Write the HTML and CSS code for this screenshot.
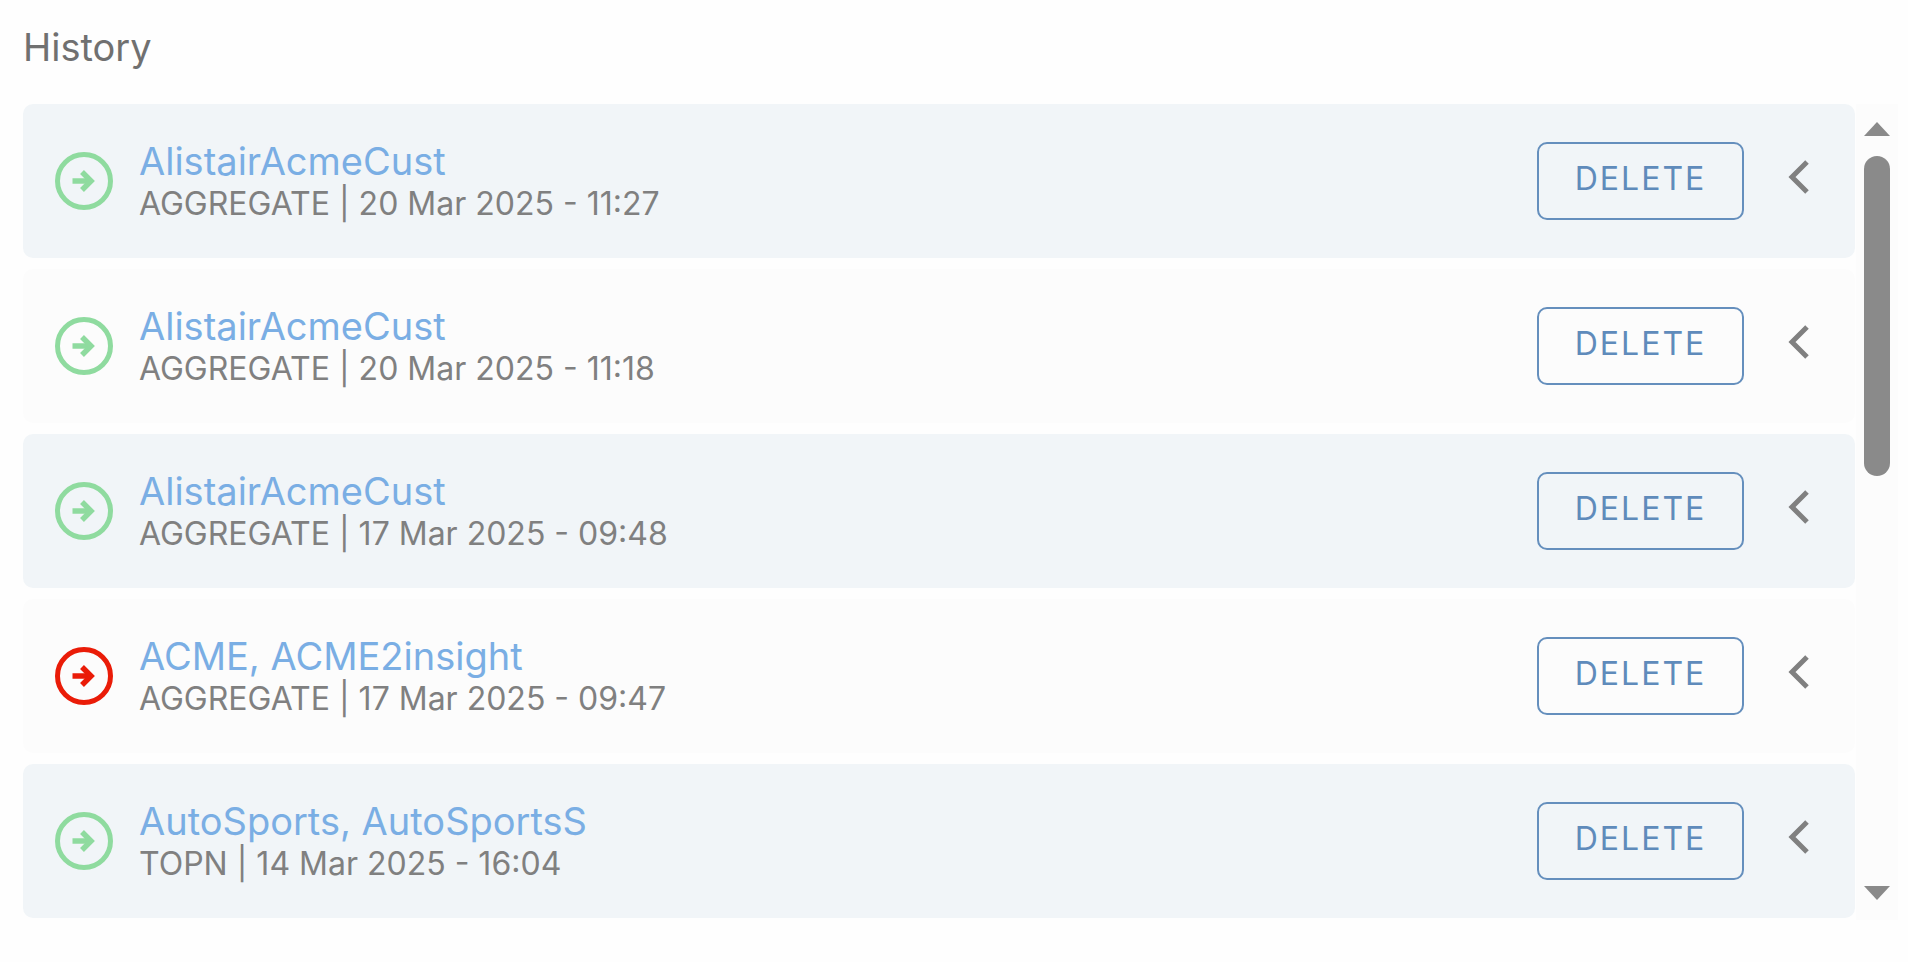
FILE: index.html
```html
<!DOCTYPE html>
<html lang="en">
<head>
    <meta charset="UTF-8">
    <meta name="viewport" content="width=device-width, initial-scale=1.0">
    <title>History</title>
    <link rel="stylesheet" href="styles.css">
</head>
<body>

    <!-- Shared icons -->
    <svg class="sprite" aria-hidden="true">
        <symbol id="icon-arrow" viewBox="0 0 58 58">
            <circle cx="29" cy="29" r="26.5" fill="none" stroke="currentColor" stroke-width="5"/>
            <path d="M17.500 29H34" fill="none" stroke="currentColor" stroke-width="5.5"/>
            <path d="M27 20l9 9-9 9" fill="none" stroke="currentColor" stroke-width="5.5"/>
        </symbol>
        <symbol id="icon-chevron" viewBox="0 0 22 36">
            <path d="M19 3L4 18l15 15" fill="none" stroke="currentColor" stroke-width="5"/>
        </symbol>
    </svg>

    <main class="history">
        <h1>History</h1>

        <div class="history-panel">
            <ul class="history-list">
                <li class="history-item">
                    <svg class="status success"><use href="#icon-arrow"/></svg>
                    <div class="details">
                        <a href="#">AlistairAcmeCust</a>
                        <p>AGGREGATE | 20 Mar 2025 - 11:27</p>
                    </div>
                    <button class="delete-btn" type="button">DELETE</button>
                    <button class="expand-btn" type="button" aria-label="Expand"><svg><use href="#icon-chevron"/></svg></button>
                </li>
                <li class="history-item">
                    <svg class="status success"><use href="#icon-arrow"/></svg>
                    <div class="details">
                        <a href="#">AlistairAcmeCust</a>
                        <p>AGGREGATE | 20 Mar 2025 - 11:18</p>
                    </div>
                    <button class="delete-btn" type="button">DELETE</button>
                    <button class="expand-btn" type="button" aria-label="Expand"><svg><use href="#icon-chevron"/></svg></button>
                </li>
                <li class="history-item">
                    <svg class="status success"><use href="#icon-arrow"/></svg>
                    <div class="details">
                        <a href="#">AlistairAcmeCust</a>
                        <p>AGGREGATE | 17 Mar 2025 - 09:48</p>
                    </div>
                    <button class="delete-btn" type="button">DELETE</button>
                    <button class="expand-btn" type="button" aria-label="Expand"><svg><use href="#icon-chevron"/></svg></button>
                </li>
                <li class="history-item">
                    <svg class="status failed"><use href="#icon-arrow"/></svg>
                    <div class="details">
                        <a href="#">ACME, ACME2insight</a>
                        <p>AGGREGATE | 17 Mar 2025 - 09:47</p>
                    </div>
                    <button class="delete-btn" type="button">DELETE</button>
                    <button class="expand-btn" type="button" aria-label="Expand"><svg><use href="#icon-chevron"/></svg></button>
                </li>
                <li class="history-item">
                    <svg class="status success"><use href="#icon-arrow"/></svg>
                    <div class="details">
                        <a href="#">AutoSports, AutoSportsS</a>
                        <p>TOPN | 14 Mar 2025 - 16:04</p>
                    </div>
                    <button class="delete-btn" type="button">DELETE</button>
                    <button class="expand-btn" type="button" aria-label="Expand"><svg><use href="#icon-chevron"/></svg></button>
                </li>
            </ul>

            <!-- Scrollbar -->
            <div class="scrollbar" aria-hidden="true">
                <svg class="scroll-arrow" viewBox="0 0 26 14"><path d="M13 0l13 14H0z"/></svg>
                <div class="scroll-track"><div class="scroll-thumb"></div></div>
                <svg class="scroll-arrow" viewBox="0 0 26 14"><path d="M0 0h26L13 14z"/></svg>
            </div>
        </div>
    </main>

</body>
</html>
```

FILE: styles.css
```css
/* Global Styles */
* {
    margin: 0;
    padding: 0;
    box-sizing: border-box;
}

body {
    background-color: #fefefe;
    color: #808080;
    font-family: Inter, sans-serif;
}

.sprite {
    display: none;
}

.history {
    padding: 23px 10px 24px 23px;
}

h1 {
    color: #707070;
    font-size: 38px;
    font-weight: 400;
    line-height: 48px;
    margin-bottom: 33px;
}

.history-panel {
    display: flex;
}

/* List */
.history-list {
    flex: 1;
    list-style: none;
    display: flex;
    flex-direction: column;
    gap: 11px;
    padding-bottom: 2px;
}

.history-item {
    display: flex;
    align-items: center;
    height: 154px;
    padding: 0 45px 0 32px;
    border-radius: 10px;
    background: #fcfcfc;
}

.history-item:nth-child(odd) {
    background: #f1f5f8;
}

.status {
    width: 58px;
    height: 58px;
    margin-right: 26px;
}

.success {
    color: #8fdb9f;
}

.failed {
    color: #ea1c08;
}

.details {
    flex: 1;
    padding-top: 4px;
}

.details a {
    display: block;
    color: #7aaee4;
    font-size: 38px;
    line-height: 42px;
    text-decoration: none;
}

.details p {
    font-size: 32px;
    line-height: 44px;
}

/* Buttons */
.delete-btn {
    width: 207px;
    height: 78px;
    padding-bottom: 6px;
    background: none;
    border: 2px solid #658fbd;
    border-radius: 10px;
    color: #5f8bbb;
    font-family: Inter, sans-serif;
    font-size: 32px;
    letter-spacing: 2px;
    cursor: pointer;
}

.expand-btn {
    margin-left: 44px;
    padding-bottom: 8px;
    background: none;
    border: none;
    color: #808080;
    cursor: pointer;
}

.expand-btn svg {
    display: block;
    width: 22px;
    height: 36px;
}

/* Scrollbar */
.scrollbar {
    display: flex;
    flex-direction: column;
    align-items: center;
    width: 42px;
    padding: 18px 0 20px;
    margin-left: 1px;
    background: #fcfcfc;
}

.scroll-arrow {
    width: 26px;
    height: 14px;
    fill: #8a8a8a;
}

.scroll-track {
    flex: 1;
    width: 26px;
    padding: 20px 0;
}

.scroll-thumb {
    height: 45%;
    border-radius: 13px;
    background: #8a8a8a;
}
```
